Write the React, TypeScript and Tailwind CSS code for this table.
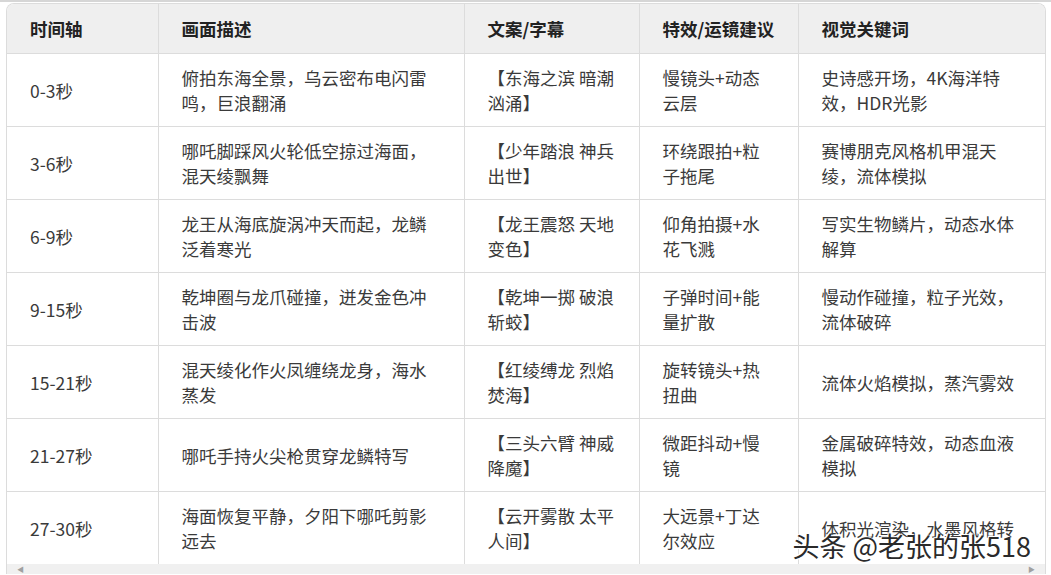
import React from "react";

const headers = ["时间轴", "画面描述", "文案/字幕", "特效/运镜建议", "视觉关键词"];

const rows = [
  ["0-3秒", "俯拍东海全景，乌云密布电闪雷\n鸣，巨浪翻涌", "【东海之滨 暗潮\n汹涌】", "慢镜头+动态\n云层", "史诗感开场，4K海洋特\n效，HDR光影"],
  ["3-6秒", "哪吒脚踩风火轮低空掠过海面，\n混天绫飘舞", "【少年踏浪 神兵\n出世】", "环绕跟拍+粒\n子拖尾", "赛博朋克风格机甲混天\n绫，流体模拟"],
  ["6-9秒", "龙王从海底旋涡冲天而起，龙鳞\n泛着寒光", "【龙王震怒 天地\n变色】", "仰角拍摄+水\n花飞溅", "写实生物鳞片，动态水体\n解算"],
  ["9-15秒", "乾坤圈与龙爪碰撞，迸发金色冲\n击波", "【乾坤一掷 破浪\n斩蛟】", "子弹时间+能\n量扩散", "慢动作碰撞，粒子光效，\n流体破碎"],
  ["15-21秒", "混天绫化作火凤缠绕龙身，海水\n蒸发", "【红绫缚龙 烈焰\n焚海】", "旋转镜头+热\n扭曲", "流体火焰模拟，蒸汽雾效"],
  ["21-27秒", "哪吒手持火尖枪贯穿龙鳞特写", "【三头六臂 神威\n降魔】", "微距抖动+慢\n镜", "金属破碎特效，动态血液\n模拟"],
  ["27-30秒", "海面恢复平静，夕阳下哪吒剪影\n远去", "【云开雾散 太平\n人间】", "大远景+丁达\n尔效应", "体积光渲染，水墨风格转"],
];

const widths = ["w-[151px]", "w-[306px]", "w-[175px]", "w-[159px]", "w-[249px]"];

export default function App() {
  return (
    <div
      className="relative h-[575px] w-[1051px] overflow-hidden border-t-2 border-[#d6d6d6] bg-white"
      style={{ fontFamily: '"Noto Sans CJK SC", "Noto Sans", sans-serif' }}
    >
      <div className="ml-[6px] mr-[5px] mt-px flex h-[571px] flex-col overflow-hidden rounded-t-lg border-x border-t border-[#dcdcdc]">
        <div className="flex-1 overflow-hidden">
          <table className="w-full table-fixed border-collapse text-[17.5px] leading-[25px]">
            <colgroup>
              {widths.map((w, i) => (
                <col key={i} className={w} />
              ))}
            </colgroup>
            <thead>
              <tr className="bg-[#efefef]">
                {headers.map((h, i) => (
                  <th
                    key={h}
                    className={`border-b border-[#dcdcdc] px-[23px] py-[12px] text-left font-bold text-[#222] ${
                      i > 0 ? "border-l" : ""
                    }`}
                  >
                    {h}
                  </th>
                ))}
              </tr>
            </thead>
            <tbody>
              {rows.map((r) => (
                <tr key={r[0]}>
                  {r.map((c, i) => (
                    <td
                      key={i}
                      className={`whitespace-pre-line border-b border-[#dcdcdc] px-[23px] py-[11px] align-middle text-[#3a3a3a] ${
                        i > 0 ? "border-l" : ""
                      }`}
                    >
                      {c}
                    </td>
                  ))}
                </tr>
              ))}
            </tbody>
          </table>
        </div>
        {/* scrollbar */}
        <div className="flex h-[10px] shrink-0 items-center justify-between bg-[#f0f0f0] px-[10px] text-[7px] leading-none text-[#a0a0a0]">
          <span>◀</span>
          <span>▶</span>
        </div>
      </div>

      <div className="pointer-events-none absolute right-[20px] top-[526px] text-[27px] leading-[36px] text-[#2a2a2a] [text-shadow:0_0_2px_#fff,1px_1px_0_#fff,-1px_-1px_0_#fff]">
        头条 @老张的张518
      </div>
    </div>
  );
}
